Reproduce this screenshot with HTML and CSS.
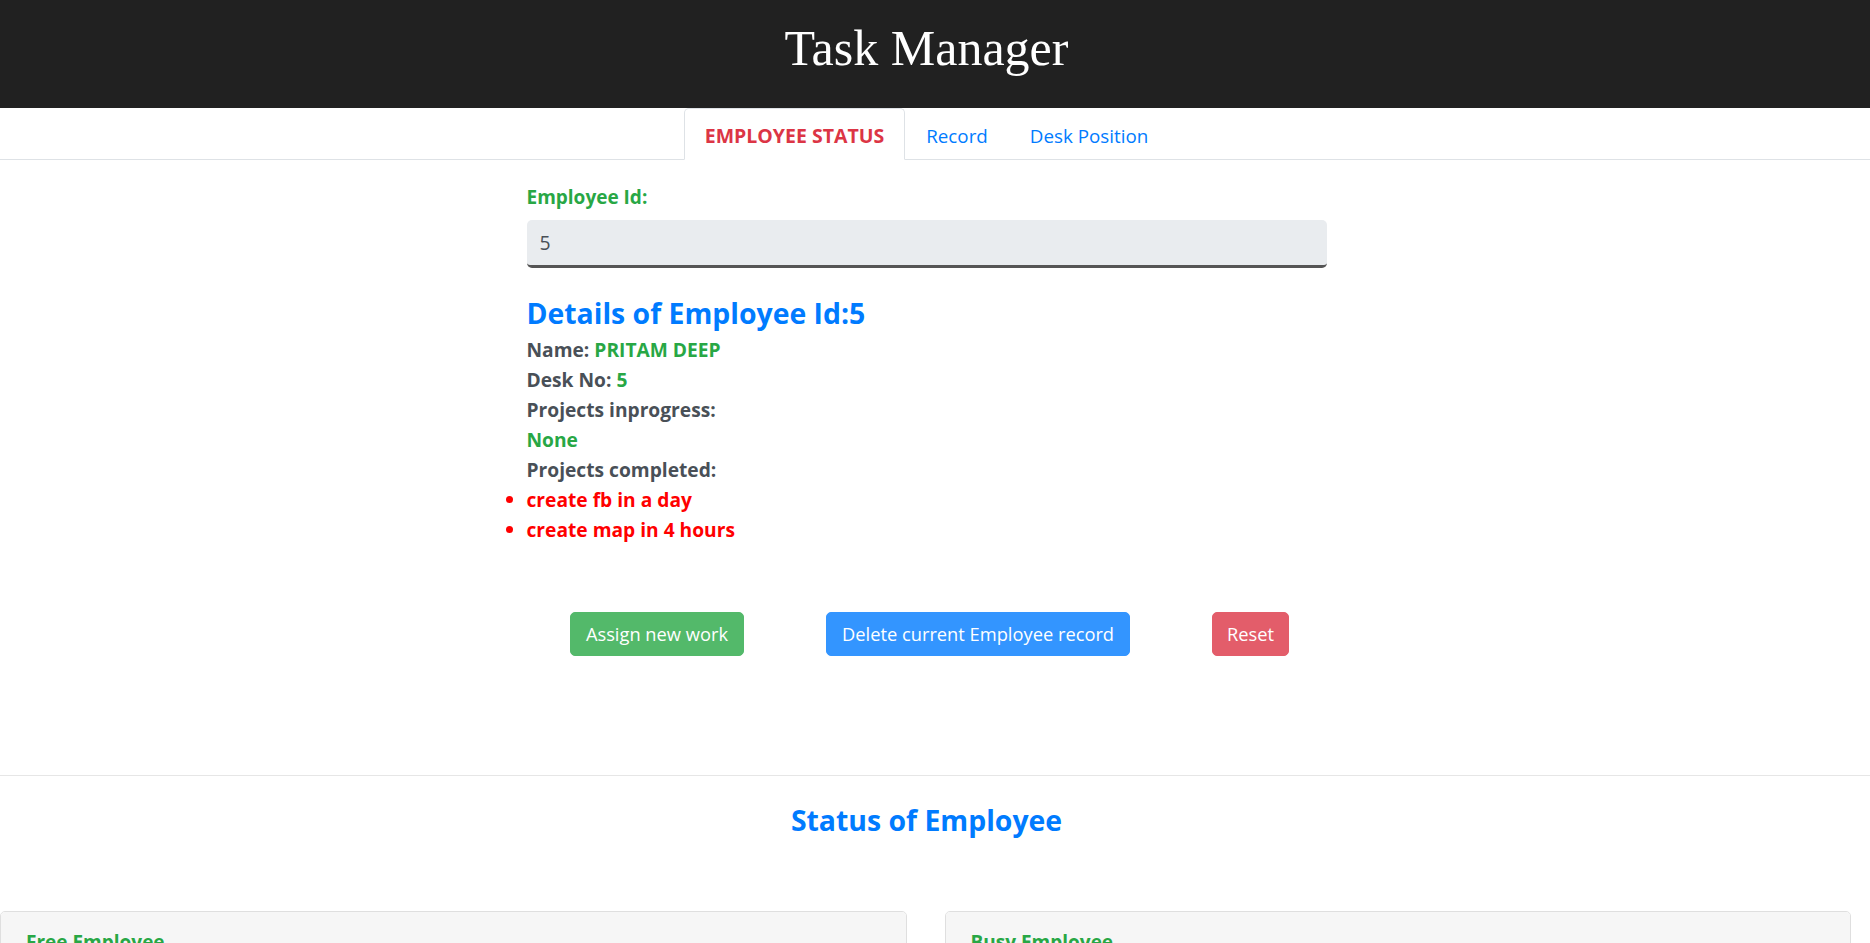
FILE: index.html
```html
<!DOCTYPE html>
<html lang="en">
<head>
<meta charset="utf-8">
<title>Task Manager</title>
<link rel="stylesheet" href="styles.css">
</head>
<body>
<header class="topbar">
  <h1 class="title">Task Manager</h1>
</header>
<nav class="tabs">
  <ul class="tab-list">
    <li><a class="tab tab-active">Employee Status</a></li>
    <li><a class="tab">Record</a></li>
    <li><a class="tab">Desk Position</a></li>
  </ul>
</nav>
<main class="main">
  <div class="panel">
    <label class="field-label" for="empid">Employee Id:</label>
    <input class="field-input" id="empid" type="text" value="5" readonly>
    <h4 class="details-title">Details of Employee Id:5</h4>
    <div class="details">
      <div class="line"><span class="key">Name:</span> <span class="val">PRITAM DEEP</span></div>
      <div class="line"><span class="key">Desk No:</span> <span class="val">5</span></div>
      <div class="line"><span class="key">Projects inprogress:</span></div>
      <div class="line"><span class="val">None</span></div>
      <div class="line"><span class="key">Projects completed:</span></div>
      <ul class="done-list">
        <li>create fb in a day</li>
        <li>create map in 4 hours</li>
      </ul>
    </div>
    <div class="actions">
      <button class="btn btn-green">Assign new work</button>
      <button class="btn btn-blue">Delete current Employee record</button>
      <button class="btn btn-red">Reset</button>
    </div>
  </div>
</main>
<hr class="divider">
<section class="status">
  <h4 class="status-title">Status of Employee</h4>
  <div class="cards">
    <div class="card"><div class="card-header">Free Employee</div><div class="card-body"></div></div>
    <div class="card"><div class="card-header">Busy Employee</div><div class="card-body"></div></div>
  </div>
</section>
</body>
</html>
```
FILE: styles.css
```css
* { box-sizing: border-box; }
html, body { margin: 0; padding: 0; }
body {
  font-family: "Open Sans", "Noto Sans", sans-serif;
  font-size: 19.2px;
  line-height: 30px;
  color: #212529;
  background: #fff;
}

.topbar {
  background: #212121;
  height: 108px;
  padding: 20px 17px 0 0;
  text-align: center;
}
.title {
  margin: 0;
  font-family: "Liberation Serif", "Times New Roman", serif;
  font-weight: 400;
  font-size: 50px;
  line-height: 56px;
  color: #fff;
}

.tabs {
  border-bottom: 1px solid #dee2e6;
  padding-right: 17px;
}
.tab-list {
  list-style: none;
  margin: 0 0 -1px 0;
  padding: 0;
  display: flex;
  justify-content: center;
}
.tab {
  display: block;
  padding: 12px 20px 8px;
  border: 1px solid transparent;
  border-radius: 5px 5px 0 0;
  color: #007bff;
  font-size: 18.8px;
  line-height: 30px;
  text-decoration: none;
}
.tab-active {
  color: #dc3545;
  font-weight: 700;
  font-size: 19.5px;
  text-transform: uppercase;
  background: #fff;
  border-color: #dee2e6 #dee2e6 #fff;
}

.main {
  padding: 22px 17px 0 0;
}
.panel {
  width: 800px;
  margin: 0 auto;
}
.field-label {
  display: block;
  color: #28a745;
  font-weight: 700;
  font-size: 19px;
  margin-bottom: 8px;
}
.field-input {
  display: block;
  width: 100%;
  height: 48px;
  margin: 0;
  padding: 0 13px;
  border: none;
  border-bottom: 3px solid #555;
  border-radius: 5px;
  background: #e9ecef;
  color: #495057;
  font-family: inherit;
  font-size: 19.4px;
  outline: none;
}
.details-title {
  margin: 27px 0 4px;
  color: #007bff;
  font-size: 28.4px;
  line-height: 36px;
  font-weight: 700;
}
.details { font-weight: 700; }
.line { line-height: 30px; }
.key { color: #495057; }
.val { color: #28a745; }
.done-list {
  margin: 0;
  padding: 0;
  color: #ff0000;
  list-style: disc outside;
}
.done-list li { line-height: 30px; }

.actions {
  display: flex;
  justify-content: center;
  gap: 82px;
  margin-top: 67px;
  padding-left: 6px;
}
.btn {
  font-family: inherit;
  font-size: 18.3px;
  line-height: 28px;
  padding: 7px 15px;
  border: 1px solid transparent;
  border-radius: 5px;
  color: #fff;
  cursor: pointer;
}
.btn-red { padding: 7px 14px; }
.btn-green { background: #53b96a; border-color: #53b96a; }
.btn-blue { background: #3395ff; border-color: #3395ff; }
.btn-red { background: #e35d6a; border-color: #e35d6a; }

.divider {
  margin: 119px 0 0;
  border: 0;
  border-top: 1px solid #e6e6e6;
  height: 0;
}

.status-title {
  margin: 26px 0 0;
  padding-right: 17px;
  text-align: center;
  color: #007bff;
  font-size: 28.4px;
  line-height: 36px;
  font-weight: 700;
}
.cards {
  display: grid;
  grid-template-columns: 1fr 1fr;
  gap: 38px;
  margin-top: 73px;
  padding-right: 19px;
}
.card {
  border: 1px solid #dfdfdf;
  border-radius: 5px;
  background: #fff;
  overflow: hidden;
}
.card-header {
  background: #f6f6f6;
  padding: 15px 25px;
  color: #28a745;
  font-weight: 700;
  font-size: 19px;
  line-height: 30px;
}
.card-body {
  background: #f6f6f6;
  height: 200px;
}
```
